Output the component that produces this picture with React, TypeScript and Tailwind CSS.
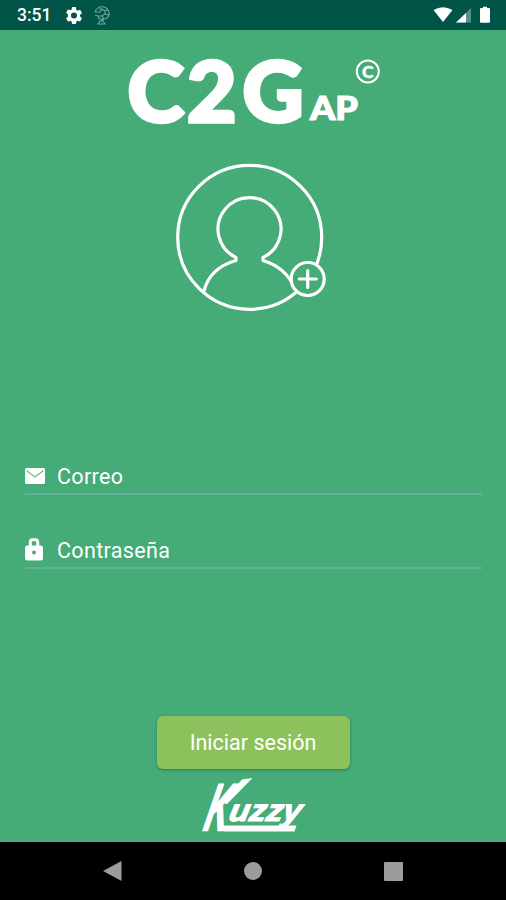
import React from 'react';

const StatusBar: React.FC = () => (
  <header className="flex h-[30px] shrink-0 items-center justify-between bg-[#005548] pl-[17px] pr-[15px] text-white">
    <div className="flex items-center">
      <span className="mt-[2px] w-[49px] font-[Roboto] text-[17.500px] leading-none font-medium">3:51</span>
      <svg className="mt-px" width="16" height="17" viewBox="2.500 2 19 20" fill="currentColor">
        <path d="M19.14 12.94c.04-.3.06-.61.06-.94s-.02-.64-.07-.94l2.03-1.58a.49.49 0 0 0 .12-.61l-1.92-3.32a.49.49 0 0 0-.59-.22l-2.39.96a7 7 0 0 0-1.62-.94l-.36-2.54A.48.48 0 0 0 13.92 2h-3.84a.48.48 0 0 0-.48.41l-.36 2.54a7 7 0 0 0-1.62.94l-2.39-.96a.48.48 0 0 0-.59.22L2.72 8.47a.48.48 0 0 0 .12.61l2.03 1.58a7 7 0 0 0 0 2.68l-2.03 1.58a.49.49 0 0 0-.12.61l1.92 3.32c.12.22.37.29.59.22l2.39-.96c.5.38 1.03.7 1.62.94l.36 2.54c.05.24.24.41.48.41h3.84c.24 0 .44-.17.48-.41l.36-2.54a7 7 0 0 0 1.62-.94l2.39.96c.22.08.47 0 .59-.22l1.92-3.32a.48.48 0 0 0-.12-.61zM12 15.6a3.6 3.6 0 1 1 0-7.2 3.6 3.6 0 0 1 0 7.2z" />
      </svg>
      <svg className="ml-[11px]" width="18" height="20" viewBox="0 0 18 20" fill="none" stroke="#6da79d" strokeWidth="1.1">
        <path d="M2 7C3 3 7 1 11 2c4 1 6 5 5 8s-3 4-5 4M2 7h5l2-3 3 2v3l-3 2H5l-3-1M12 6l3-2M12 9l4 1M9 11l2 3-3 2M5 11l1 3h5M5 19h7l-2-3H7zM6 4l3 0" />
      </svg>
    </div>
    <svg width="58" height="18" viewBox="0 0 58 18" fill="currentColor">
      <path d="M.5 4Q10 -1.5 19.500 4L10 16z" />
      <path d="M23 16.500L38 2v14.500z" opacity=".35" />
      <path d="M23 16.500L33 7v9.500z" />
      <path d="M48 2h2V.7h4V2h2q1 0 1 1v12.700q0 1-1 1h-8q-1 0-1-1V3q0-1 1-1z" />
    </svg>
  </header>
);

const Logo: React.FC = () => (
  <svg className="mx-auto shrink-0" width="260" height="110" viewBox="124 34 260 110" fill="#fff">
    <g fontFamily="Lato, sans-serif" fontWeight="900" stroke="#fff">
      <g fontSize="83" strokeWidth="3.500">
        <text x="128.500" y="121.700" textLength="56.500" lengthAdjust="spacingAndGlyphs">C</text>
        <text x="188" y="121.700" textLength="49.500" lengthAdjust="spacingAndGlyphs">2</text>
        <text x="243.500" y="121.700" textLength="61" lengthAdjust="spacingAndGlyphs">G</text>
      </g>
      <text x="311" y="119.500" fontSize="33" strokeWidth="1.200" textLength="48" lengthAdjust="spacingAndGlyphs">AP</text>
    </g>
    <circle cx="368.800" cy="71.500" r="11" fill="none" stroke="#fff" strokeWidth="2" />
    <text x="368.800" y="77.500" fontFamily="Lato, sans-serif" fontWeight="900" fontSize="17.500" stroke="#fff" strokeWidth=".4" textAnchor="middle">C</text>
  </svg>
);

const Avatar: React.FC = () => (
  <svg
    className="mt-[16px] ml-[172px] shrink-0"
    width="158"
    height="154"
    viewBox="172 160 158 154"
    fill="none"
    stroke="#fff"
    strokeWidth="3.200"
    strokeLinecap="round"
    strokeLinejoin="round"
  >
    <circle cx="249.700" cy="237.300" r="72" />
    <path d="M204 291C208 275 220 265 236 260.500V257.500A31.500 31.500 0 1 1 263 257.500V260.500C278 265 289 274 295 289" />
    <circle cx="307.700" cy="279" r="16.500" fill="#45ab77" />
    <path d="M299.300 279h17M307.700 270.500v17" />
  </svg>
);

// Marca del fabricante al pie de la pantalla
const Brand: React.FC = () => (
  <svg className="mx-auto mt-[6px] shrink-0 overflow-visible" width="110" height="60" viewBox="199 775 110 60" fill="#fff">
    <g fontFamily="'Liberation Sans', sans-serif" fontWeight="700" fontStyle="italic" stroke="#fff">
      <text transform="translate(203.500 830) skewX(-14)" fontSize="66" strokeWidth="2.500" textLength="23" lengthAdjust="spacingAndGlyphs">K</text>
      <text transform="translate(229 820.500) skewX(-11)" fontSize="31" strokeWidth="1.200" textLength="72" lengthAdjust="spacingAndGlyphs">uzzy</text>
    </g>
    <path d="M222 803L243 779.500L253.500 778L228 804z" />
    <path d="M223 825.500h74.500l-2 6h-70.500z" />
  </svg>
);

interface FieldProps {
  label: string;
  icon: React.ReactNode;
}

const Field: React.FC<FieldProps> = ({ label, icon }) => (
  <label className="flex h-[37px] items-center border-b-2 border-[#62b098]">
    <span className="w-[32px]">{icon}</span>
    <span className="mt-[3px] text-[21.500px] leading-none tracking-[0.35px]">{label}</span>
  </label>
);

export default function App() {
  return (
    <div className="flex h-[900px] w-[506px] flex-col overflow-hidden bg-[#45ab77] font-[Roboto] text-white">
      <StatusBar />
      <main className="flex h-[812px] shrink-0 flex-col pt-[4px]">
        <Logo />
        <Avatar />
        <form className="mt-[144px] flex flex-col gap-[37px] pr-[24px] pl-[25px]">
          <Field
            label="Correo"
            icon={
              <svg width="20" height="16" viewBox="0 0 20 16">
                <rect width="20" height="16" rx="1.500" fill="#fff" />
                <path d="M1.500 2.500L10 9l8.500-6.500" fill="none" stroke="#6fbc94" strokeWidth="1.200" />
              </svg>
            }
          />
          <Field
            label="Contraseña"
            icon={
              <svg width="18" height="23" viewBox="0 0 18 23">
                <path d="M5.300 9V4q0-2.300 2.200-2.300h3q2.200 0 2.200 2.300v5" fill="none" stroke="#fff" strokeWidth="3" />
                <rect y="7.500" width="18" height="15" rx="2.500" fill="#fff" />
                <circle cx="9" cy="14.500" r="2" fill="#45ab77" />
              </svg>
            }
          />
        </form>
        <button
          type="button"
          className="mx-auto mt-[147px] h-[53px] w-[193px] shrink-0 rounded-[6px] bg-[#8dc15c] pt-[2px] text-[21.500px] shadow-[0_1px_3px_rgba(0,0,0,0.3)]"
        >
          Iniciar sesión
        </button>
        <Brand />
      </main>
      <nav className="flex h-[58px] shrink-0 items-center justify-between bg-black pr-[103px] pl-[103px]">
        <svg width="19" height="20" viewBox="0 0 19 20" fill="#9c9c9c">
          <path d="M0 10L18.500 0v20z" />
        </svg>
        <span className="h-[18px] w-[18px] rounded-full bg-[#9c9c9c]" />
        <span className="h-[19px] w-[19px] rounded-[1px] bg-[#9c9c9c]" />
      </nav>
    </div>
  );
}
